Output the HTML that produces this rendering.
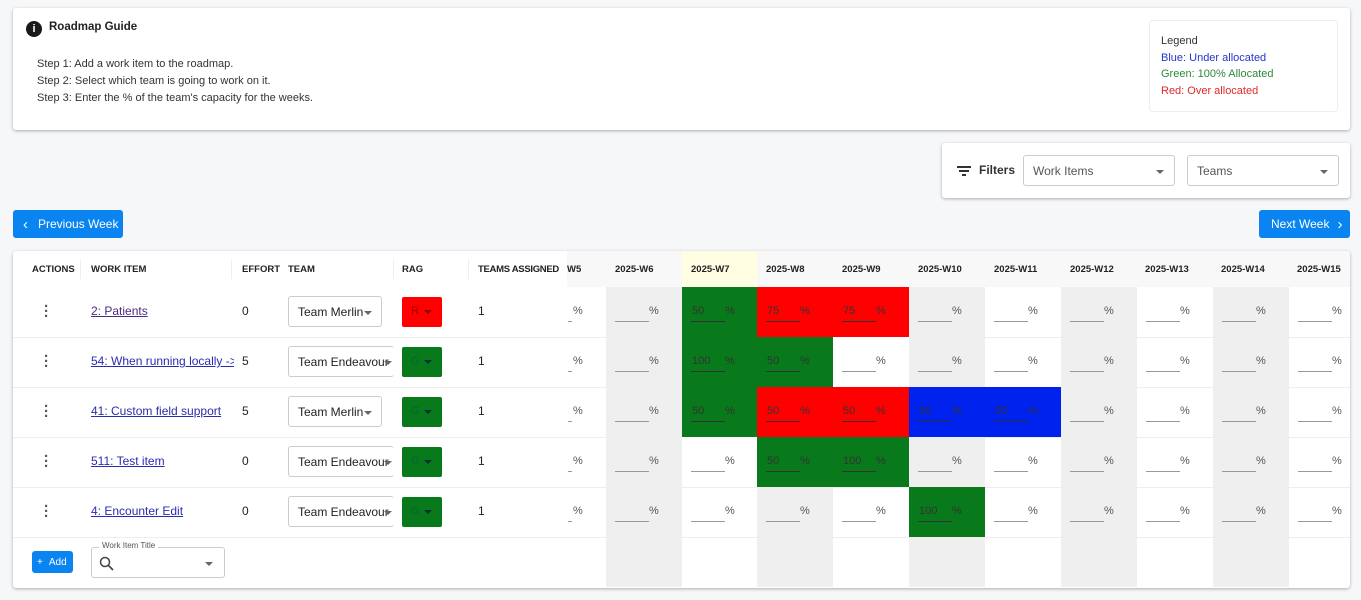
<!DOCTYPE html>
<html><head><meta charset="utf-8"><style>
*{box-sizing:border-box;margin:0;padding:0}
body{width:1361px;height:600px;background:#f6f7f9;font-family:"Liberation Sans",sans-serif;color:#222;position:relative;overflow:hidden;white-space:nowrap}
.a{position:absolute}
.card{background:#fff;border-radius:3px;box-shadow:0 1px 3px rgba(0,0,0,.3)}
.btn{background:#0a84f0;color:#fff;font-size:12px;border-radius:3px;display:flex;align-items:center;white-space:nowrap}
.hd{font-size:9.5px;font-weight:bold;color:#222}
.sel{border:1px solid #ccc;border-radius:3px;background:#fff;font-size:12px;display:flex;align-items:center;padding-left:9px;white-space:nowrap;overflow:hidden}
.tri{width:0;height:0;border-left:4px solid transparent;border-right:4px solid transparent;border-top:4px solid #666;position:absolute}
.lnk{color:#2b2bb0;text-decoration:underline;font-size:12px}
.c{position:absolute;height:50px;font-size:11px;color:#555}
.c i{position:absolute;left:9px;top:34px;width:34px;height:1px;background:#999}
.c b{position:absolute;left:43px;top:18px;font-weight:normal}
.c s{position:absolute;left:10px;top:18px;text-decoration:none;color:#333}
.g{background:#087a1c}.r{background:#ff0000}.u{background:#0022ee}.gr{background:#efefef}
.g i,.r i,.u i{background:#333}.g b,.r b,.u b{color:#333}
.n{font-size:12px}
</style></head><body>

<div class="a card" style="left:13px;top:8px;width:1337px;height:122px">
 <div class="a" style="left:13px;top:13px;width:16px;height:16px;border-radius:50%;background:#1a1a1a;color:#fff;font-size:11px;font-weight:bold;text-align:center;line-height:16px">i</div>
 <div class="a" style="left:36px;top:13px;font-size:11.5px;font-weight:bold;color:#222">Roadmap Guide</div>
 <div class="a" style="left:24px;top:48px;font-size:11px;line-height:17px;color:#333">Step 1: Add a work item to the roadmap.<br>Step 2: Select which team is going to work on it.<br>Step 3: Enter the % of the team's capacity for the weeks.</div>
 <div class="a" style="left:1136px;top:12px;width:189px;height:92px;border:1px solid #eee;border-radius:4px;font-size:11px;line-height:16.5px;padding:12px 11px">
  <div style="color:#333">Legend</div><div style="color:#2236c8">Blue: Under allocated</div><div style="color:#2a8a3a">Green: 100% Allocated</div><div style="color:#e02828">Red: Over allocated</div>
 </div>
</div>

<div class="a card" style="left:942px;top:143px;width:408px;height:55px">
 <div class="a" style="left:15px;top:23px;width:14px;height:2px;background:#333"></div>
 <div class="a" style="left:17px;top:27px;width:10px;height:2px;background:#333"></div>
 <div class="a" style="left:20px;top:31px;width:4px;height:2px;background:#333"></div>
 <div class="a" style="left:37px;top:20px;font-size:12px;font-weight:bold;color:#333">Filters</div>
 <div class="a sel" style="left:81px;top:12px;width:152px;height:31px;color:#555">Work Items<span class="tri" style="left:132px;top:14px"></span></div>
 <div class="a sel" style="left:245px;top:12px;width:152px;height:31px;color:#555">Teams<span class="tri" style="left:132px;top:14px"></span></div>
</div>

<div class="a btn" style="left:13px;top:210px;width:110px;height:28px;padding-left:10px"><span style="font-size:15px;margin-right:10px">&#8249;</span>Previous Week</div>
<div class="a btn" style="left:1259px;top:210px;width:91px;height:28px;padding-left:12px">Next Week<span style="font-size:15px;margin-left:8px">&#8250;</span></div>

<div class="a card" style="left:13px;top:251px;width:1337px;height:337px;overflow:hidden">
 <div class="a" style="left:554px;top:0;width:783px;height:36px;background:#f8f8f8"></div>
 <div class="a" style="left:669px;top:0;width:75px;height:36px;background:#fffde2"></div>
</div>

<div class="a" style="left:13px;top:251px;width:1337px;height:337px;overflow:hidden">
 <div class="a gr" style="left:593px;top:36px;width:76px;height:300px"></div>
 <div class="a gr" style="left:744px;top:36px;width:76px;height:300px"></div>
 <div class="a gr" style="left:896px;top:36px;width:76px;height:300px"></div>
 <div class="a gr" style="left:1048px;top:36px;width:76px;height:300px"></div>
 <div class="a gr" style="left:1200px;top:36px;width:76px;height:300px"></div>
 <div class="a" style="left:0;top:86px;width:1337px;height:1px;background:#eee"></div>
 <div class="a" style="left:0;top:136px;width:1337px;height:1px;background:#eee"></div>
 <div class="a" style="left:0;top:186px;width:1337px;height:1px;background:#eee"></div>
 <div class="a" style="left:0;top:236px;width:1337px;height:1px;background:#eee"></div>
 <div class="a" style="left:0;top:286px;width:1337px;height:1px;background:#eee"></div>
 <div class="a hd" style="left:19px;top:13px">ACTIONS</div>
 <div class="a" style="left:67px;top:8px;width:1px;height:20px;background:#eee"></div>
 <div class="a hd" style="left:78px;top:13px">WORK ITEM</div>
 <div class="a" style="left:218px;top:8px;width:1px;height:20px;background:#eee"></div>
 <div class="a hd" style="left:229px;top:13px">EFFORT</div>
 <div class="a hd" style="left:275px;top:13px">TEAM</div>
 <div class="a" style="left:380px;top:8px;width:1px;height:20px;background:#eee"></div>
 <div class="a hd" style="left:389px;top:13px">RAG</div>
 <div class="a" style="left:455px;top:8px;width:1px;height:20px;background:#eee"></div>
 <div class="a hd" style="left:465px;top:13px;letter-spacing:-0.3px">TEAMS ASSIGNED</div>
 <div class="a" style="left:554px;top:0;width:40px;height:36px;background:#f8f8f8"></div>
 <div class="a hd" style="left:554px;top:13px">W5</div>
 <div class="a hd" style="left:602px;top:13px">2025-W6</div>
 <div class="a hd" style="left:678px;top:13px">2025-W7</div>
 <div class="a hd" style="left:753px;top:13px">2025-W8</div>
 <div class="a hd" style="left:829px;top:13px">2025-W9</div>
 <div class="a hd" style="left:905px;top:13px">2025-W10</div>
 <div class="a hd" style="left:981px;top:13px">2025-W11</div>
 <div class="a hd" style="left:1057px;top:13px">2025-W12</div>
 <div class="a hd" style="left:1132px;top:13px">2025-W13</div>
 <div class="a hd" style="left:1208px;top:13px">2025-W14</div>
 <div class="a hd" style="left:1284px;top:13px">2025-W15</div>
</div>

<div class="a" style="left:0;top:287px;width:1361px;height:250px">
 <div class="a" style="left:44px;top:17px;font-size:15px;line-height:5px;color:#555;font-weight:bold">·<br>·<br>·</div>
 <div class="a" style="left:44px;top:67px;font-size:15px;line-height:5px;color:#555;font-weight:bold">·<br>·<br>·</div>
 <div class="a" style="left:44px;top:117px;font-size:15px;line-height:5px;color:#555;font-weight:bold">·<br>·<br>·</div>
 <div class="a" style="left:44px;top:167px;font-size:15px;line-height:5px;color:#555;font-weight:bold">·<br>·<br>·</div>
 <div class="a" style="left:44px;top:217px;font-size:15px;line-height:5px;color:#555;font-weight:bold">·<br>·<br>·</div>

 <div class="a lnk" style="left:91px;top:17px;color:#4a2a80">2: Patients</div>
 <div class="a lnk" style="left:91px;top:67px;width:143px;overflow:hidden">54: When running locally -&gt; D</div>
 <div class="a lnk" style="left:91px;top:117px">41: Custom field support</div>
 <div class="a lnk" style="left:91px;top:167px">511: Test item</div>
 <div class="a lnk" style="left:91px;top:217px">4: Encounter Edit</div>

 <div class="a n" style="left:242px;top:17px">0</div>
 <div class="a n" style="left:242px;top:67px">5</div>
 <div class="a n" style="left:242px;top:117px">5</div>
 <div class="a n" style="left:242px;top:167px">0</div>
 <div class="a n" style="left:242px;top:217px">0</div>

 <div class="a sel" style="left:288px;top:9px;width:94px;height:31px">Team Merlin<span class="tri" style="left:75px;top:14px"></span></div>
 <div class="a sel" style="left:288px;top:59px;width:106px;height:31px;border-right:none">Team Endeavour<span class="tri" style="left:95px;top:14px"></span></div>
 <div class="a sel" style="left:288px;top:109px;width:94px;height:31px">Team Merlin<span class="tri" style="left:75px;top:14px"></span></div>
 <div class="a sel" style="left:288px;top:159px;width:106px;height:31px;border-right:none">Team Endeavour<span class="tri" style="left:95px;top:14px"></span></div>
 <div class="a sel" style="left:288px;top:209px;width:106px;height:31px;border-right:none">Team Endeavour<span class="tri" style="left:95px;top:14px"></span></div>

 <div class="a r" style="left:402px;top:10px;width:40px;height:30px;border-radius:2px;font-size:11px;color:#900;padding:8px 0 0 9px">R<span class="tri" style="left:22px;top:13px;border-top-color:#800"></span></div>
 <div class="a g" style="left:402px;top:60px;width:40px;height:30px;border-radius:2px;font-size:11px;color:#063;padding:8px 0 0 9px">G<span class="tri" style="left:22px;top:13px;border-top-color:#033"></span></div>
 <div class="a g" style="left:402px;top:110px;width:40px;height:30px;border-radius:2px;font-size:11px;color:#063;padding:8px 0 0 9px">G<span class="tri" style="left:22px;top:13px;border-top-color:#033"></span></div>
 <div class="a g" style="left:402px;top:160px;width:40px;height:30px;border-radius:2px;font-size:11px;color:#063;padding:8px 0 0 9px">G<span class="tri" style="left:22px;top:13px;border-top-color:#033"></span></div>
 <div class="a g" style="left:402px;top:210px;width:40px;height:30px;border-radius:2px;font-size:11px;color:#063;padding:8px 0 0 9px">G<span class="tri" style="left:22px;top:13px;border-top-color:#033"></span></div>

 <div class="a n" style="left:478px;top:17px">1</div>
 <div class="a n" style="left:478px;top:67px">1</div>
 <div class="a n" style="left:478px;top:117px">1</div>
 <div class="a n" style="left:478px;top:167px">1</div>
 <div class="a n" style="left:478px;top:217px">1</div>

 <div class="c" style="left:567px;top:0;width:39px"><i style="left:1px;width:4px"></i><b style="left:6px">%</b></div>
 <div class="c" style="left:567px;top:50px;width:39px"><i style="left:1px;width:4px"></i><b style="left:6px">%</b></div>
 <div class="c" style="left:567px;top:100px;width:39px"><i style="left:1px;width:4px"></i><b style="left:6px">%</b></div>
 <div class="c" style="left:567px;top:150px;width:39px"><i style="left:1px;width:4px"></i><b style="left:6px">%</b></div>
 <div class="c" style="left:567px;top:200px;width:39px"><i style="left:1px;width:4px"></i><b style="left:6px">%</b></div>

 <div class="c" style="left:606px;top:0;width:76px"><i></i><b>%</b></div>
 <div class="c g" style="left:682px;top:0;width:75px"><s>50</s><i></i><b>%</b></div>
 <div class="c r" style="left:757px;top:0;width:76px"><s>75</s><i></i><b>%</b></div>
 <div class="c r" style="left:833px;top:0;width:76px"><s>75</s><i></i><b>%</b></div>
 <div class="c" style="left:909px;top:0;width:76px"><i></i><b>%</b></div>
 <div class="c" style="left:985px;top:0;width:76px"><i></i><b>%</b></div>
 <div class="c" style="left:1061px;top:0;width:76px"><i></i><b>%</b></div>
 <div class="c" style="left:1137px;top:0;width:76px"><i></i><b>%</b></div>
 <div class="c" style="left:1213px;top:0;width:76px"><i></i><b>%</b></div>
 <div class="c" style="left:1289px;top:0;width:60px"><i></i><b>%</b></div>

 <div class="c" style="left:606px;top:50px;width:76px"><i></i><b>%</b></div>
 <div class="c g" style="left:682px;top:50px;width:75px"><s>100</s><i></i><b>%</b></div>
 <div class="c g" style="left:757px;top:50px;width:76px"><s>50</s><i></i><b>%</b></div>
 <div class="c" style="left:833px;top:50px;width:76px;background:#fff"><i></i><b>%</b></div>
 <div class="c" style="left:909px;top:50px;width:76px"><i></i><b>%</b></div>
 <div class="c" style="left:985px;top:50px;width:76px"><i></i><b>%</b></div>
 <div class="c" style="left:1061px;top:50px;width:76px"><i></i><b>%</b></div>
 <div class="c" style="left:1137px;top:50px;width:76px"><i></i><b>%</b></div>
 <div class="c" style="left:1213px;top:50px;width:76px"><i></i><b>%</b></div>
 <div class="c" style="left:1289px;top:50px;width:60px"><i></i><b>%</b></div>

 <div class="c" style="left:606px;top:100px;width:76px"><i></i><b>%</b></div>
 <div class="c g" style="left:682px;top:100px;width:75px"><s>50</s><i></i><b>%</b></div>
 <div class="c r" style="left:757px;top:100px;width:76px"><s>50</s><i></i><b>%</b></div>
 <div class="c r" style="left:833px;top:100px;width:76px"><s>50</s><i></i><b>%</b></div>
 <div class="c u" style="left:909px;top:100px;width:76px"><s>50</s><i></i><b>%</b></div>
 <div class="c u" style="left:985px;top:100px;width:76px"><s>50</s><i></i><b>%</b></div>
 <div class="c" style="left:1061px;top:100px;width:76px"><i></i><b>%</b></div>
 <div class="c" style="left:1137px;top:100px;width:76px"><i></i><b>%</b></div>
 <div class="c" style="left:1213px;top:100px;width:76px"><i></i><b>%</b></div>
 <div class="c" style="left:1289px;top:100px;width:60px"><i></i><b>%</b></div>

 <div class="c" style="left:606px;top:150px;width:76px"><i></i><b>%</b></div>
 <div class="c" style="left:682px;top:150px;width:75px;background:#fff"><i></i><b>%</b></div>
 <div class="c g" style="left:757px;top:150px;width:76px"><s>50</s><i></i><b>%</b></div>
 <div class="c g" style="left:833px;top:150px;width:76px"><s>100</s><i></i><b>%</b></div>
 <div class="c" style="left:909px;top:150px;width:76px"><i></i><b>%</b></div>
 <div class="c" style="left:985px;top:150px;width:76px"><i></i><b>%</b></div>
 <div class="c" style="left:1061px;top:150px;width:76px"><i></i><b>%</b></div>
 <div class="c" style="left:1137px;top:150px;width:76px"><i></i><b>%</b></div>
 <div class="c" style="left:1213px;top:150px;width:76px"><i></i><b>%</b></div>
 <div class="c" style="left:1289px;top:150px;width:60px"><i></i><b>%</b></div>

 <div class="c" style="left:606px;top:200px;width:76px"><i></i><b>%</b></div>
 <div class="c" style="left:682px;top:200px;width:75px"><i></i><b>%</b></div>
 <div class="c" style="left:757px;top:200px;width:76px"><i></i><b>%</b></div>
 <div class="c" style="left:833px;top:200px;width:76px"><i></i><b>%</b></div>
 <div class="c g" style="left:909px;top:200px;width:76px"><s>100</s><i></i><b>%</b></div>
 <div class="c" style="left:985px;top:200px;width:76px"><i></i><b>%</b></div>
 <div class="c" style="left:1061px;top:200px;width:76px"><i></i><b>%</b></div>
 <div class="c" style="left:1137px;top:200px;width:76px"><i></i><b>%</b></div>
 <div class="c" style="left:1213px;top:200px;width:76px"><i></i><b>%</b></div>
 <div class="c" style="left:1289px;top:200px;width:60px"><i></i><b>%</b></div>
</div>

<div class="a btn" style="left:32px;top:551px;width:41px;height:22px;font-size:10px;padding-left:5px"><span style="margin-right:6px">+</span>Add</div>
<div class="a" style="left:91px;top:547px;width:134px;height:31px;border:1px solid #ccc;border-radius:3px;background:#fff">
 <div class="a" style="left:7px;top:-7px;background:#fff;padding:0 3px;font-size:8px;color:#555">Work Item Title</div>
 <svg class="a" style="left:7px;top:8px" width="16" height="16" viewBox="0 0 16 16"><circle cx="6" cy="6" r="4.5" fill="none" stroke="#444" stroke-width="1.5"/><path d="M9.5 9.5L14 14" stroke="#444" stroke-width="1.7"/></svg>
 <span class="tri" style="left:113px;top:14px"></span>
</div>
</body></html>
